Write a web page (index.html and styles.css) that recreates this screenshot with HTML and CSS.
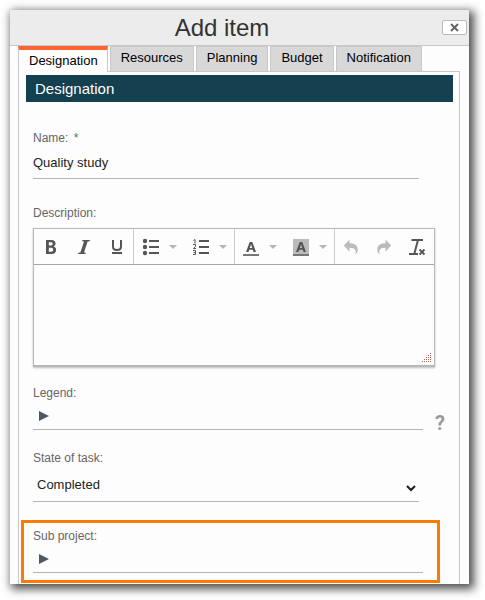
FILE: index.html
```html
<!DOCTYPE html>
<html lang="en">
<head>
<meta charset="utf-8">
<meta name="viewport" content="width=device-width, initial-scale=1">
<title>Add item</title>
<link rel="stylesheet" href="styles.css">
</head>
<body>
<main class="dialog" role="dialog" aria-labelledby="dialog-title">
  <header class="dialog-header">
    <h1 class="dialog-title" id="dialog-title">Add item</h1>
    <button class="close" type="button" aria-label="Close">
      <svg width="9" height="9" viewBox="0 0 9 9"><path d="M1 1l7 7M8 1l-7 7" stroke="#666" stroke-width="2"/></svg>
    </button>
  </header>
  <div class="dialog-body">
    <div class="tabs" role="tablist">
      <button class="tab tab-active" type="button" role="tab" aria-selected="true">Designation</button>
      <button class="tab" type="button" role="tab">Resources</button>
      <button class="tab" type="button" role="tab">Planning</button>
      <button class="tab" type="button" role="tab">Budget</button>
      <button class="tab" type="button" role="tab">Notification</button>
    </div>
    <form class="panel" role="tabpanel">
      <h2 class="section-title">Designation</h2>

      <div class="field field-name">
        <label class="label" for="name">Name: <span class="required">*</span></label>
        <input class="line line-name" id="name" type="text" value="Quality study">
      </div>

      <div class="field field-description">
        <label class="label" for="description">Description:</label>
        <div class="editor">
          <div class="toolbar" role="toolbar">
            <div class="group">
              <button class="tool" type="button" aria-label="Bold"><svg width="20" height="20" viewBox="0 0 20 20"><path fill-rule="evenodd" fill="#555" d="M5 3h5.300c2.700 0 4.200 1.300 4.200 3.500 0 1.400-.7 2.400-1.900 2.900 1.600.4 2.500 1.600 2.500 3.300 0 2.700-1.700 4.300-4.600 4.300H5zM7.800 5.200v3.300h2c1.300 0 1.900-.6 1.900-1.700 0-1.100-.6-1.600-1.900-1.600zM7.800 10.700v4h2.300c1.400 0 2.100-.7 2.100-2s-.7-2-2.100-2z"/></svg></button>
              <button class="tool" type="button" aria-label="Italic"><svg width="20" height="20" viewBox="0 0 20 20"><path fill="#555" d="M8.500 3H16l-.4 1.200-2 .4L10 15.400l1.800.4-.4 1.200H4l.4-1.200 2-.4L10 4.600l-1.900-.4z"/></svg></button>
              <button class="tool" type="button" aria-label="Underline"><svg width="20" height="20" viewBox="0 0 20 20"><path fill="none" stroke="#555" stroke-width="2" d="M6 3v6.500c0 2.400 1.500 3.500 4 3.500s4-1.100 4-3.500V3M5 16h10"/></svg></button>
            </div>
            <div class="group">
              <button class="tool tool-wide" type="button" aria-label="Bulleted list"><svg width="20" height="20" viewBox="0 0 20 20"><g fill="#555"><circle cx="4" cy="4" r="2.200"/><circle cx="4" cy="10" r="2.200"/><circle cx="4" cy="16" r="2.200"/><path d="M8 3h10v2H8zM8 9h10v2H8zM8 15h10v2H8z"/></g></svg><svg class="caret" width="8" height="4" viewBox="0 0 8 4"><path fill="#b4b7ba" d="M0 0h8L4 4z"/></svg></button>
              <button class="tool tool-wide" type="button" aria-label="Numbered list"><svg width="20" height="20" viewBox="0 0 20 20"><path fill="#555" d="M8 3h10v2H8zM8 9h10v2H8zM8 15h10v2H8z"/><path fill="none" stroke="#555" d="M2.500 3.500l1.500-1v4M2 7.500h2.500v2L2.500 11.500H5M2 13.500h2.500v4H2M2.500 15.500h2"/></svg><svg class="caret" width="8" height="4" viewBox="0 0 8 4"><path fill="#b4b7ba" d="M0 0h8L4 4z"/></svg></button>
            </div>
            <div class="group">
              <button class="tool tool-wide" type="button" aria-label="Text color"><svg width="20" height="20" viewBox="0 0 20 20"><path fill="#777" d="M2 17h16v2H2z"/><path fill-rule="evenodd" fill="#555" d="M8.700 5h2.600l3.700 10h-2.500l-.7-2.200H8.200L7.500 15H5zM10 7.300L8.800 11h2.400z"/></svg><svg class="caret" width="8" height="4" viewBox="0 0 8 4"><path fill="#b4b7ba" d="M0 0h8L4 4z"/></svg></button>
              <button class="tool tool-wide" type="button" aria-label="Background color"><svg width="20" height="20" viewBox="0 0 20 20"><path fill="#bbb" d="M2 2h16v15H2z"/><path fill="#777" d="M2 17h16v2H2z"/><path fill-rule="evenodd" fill="#555" d="M8.700 5h2.600l3.700 10h-2.500l-.7-2.200H8.200L7.500 15H5zM10 7.300L8.800 11h2.400z"/></svg><svg class="caret" width="8" height="4" viewBox="0 0 8 4"><path fill="#b4b7ba" d="M0 0h8L4 4z"/></svg></button>
            </div>
            <div class="group group-last">
              <button class="tool" type="button" aria-label="Undo"><svg width="20" height="20" viewBox="0 0 20 20"><path fill="#bbb" d="M8.500 2.500v3.800c5.500 0 8.300 2.600 8.300 6.200 0 2.200-1 3.900-2.800 5 .8-1.400 1-2.700.5-4-.8-2-2.600-2.700-6-2.700v3.900L2.800 8.500z"/></svg></button>
              <button class="tool" type="button" aria-label="Redo"><svg width="20" height="20" viewBox="0 0 20 20"><path fill="#bbb" d="M11.500 2.500v3.800c-5.500 0-8.300 2.600-8.300 6.200 0 2.200 1 3.900 2.800 5-.8-1.400-1-2.700-.5-4 .8-2 2.600-2.700 6-2.700v3.900l5.700-6.200z"/></svg></button>
              <button class="tool" type="button" aria-label="Clear formatting"><svg width="20" height="20" viewBox="0 0 20 20"><path fill="none" stroke="#555" stroke-width="2" d="M4.500 3H16M11 3L7.500 16M2 17h9"/><path fill="none" stroke="#555" stroke-width="1.800" d="M12.500 12.500l5 5M17.500 12.500l-5 5"/></svg></button>
            </div>
          </div>
          <textarea class="editor-text" id="description"></textarea>
          <svg class="grip" width="10" height="10" viewBox="0 0 10 10"><path stroke="#a8675a" stroke-dasharray="1 1" d="M8 .5h2M6 2.500h4M4 4.500h6M2 6.500h8M0 8.500h10"/></svg>
        </div>
      </div>

      <div class="field field-legend">
        <span class="label" id="legend-label">Legend:</span>
        <div class="legend-row">
          <button class="line line-expand" type="button" aria-labelledby="legend-label"><svg width="10" height="10" viewBox="0 0 10 10"><path fill="#505862" d="M0 0l10 5-10 5z"/></svg></button>
          <button class="help" type="button">?</button>
        </div>
      </div>

      <div class="field field-state">
        <label class="label" for="state">State of task:</label>
        <div class="select-wrap">
          <select class="line line-select" id="state"><option>Completed</option></select>
          <svg class="chevron" width="10" height="7" viewBox="0 0 10 7"><path fill="none" stroke="#1c1c1c" stroke-width="2" d="M1 1l4 4 4-4"/></svg>
        </div>
      </div>

      <div class="highlight">
        <span class="label" id="sub-label">Sub project:</span>
        <button class="line line-expand" type="button" aria-labelledby="sub-label"><svg width="10" height="10" viewBox="0 0 10 10"><path fill="#505862" d="M0 0l10 5-10 5z"/></svg></button>
      </div>
    </form>
  </div>
</main>
</body>
</html>
```
FILE: styles.css
```css
* {
  box-sizing: border-box;
}

body {
  margin: 0;
  padding: 10px 16px 16px 10px;
  background: #fff;
  color: #222;
  font: 13px/16px "Liberation Sans", Arial, sans-serif;
}

button,
input,
select,
textarea {
  margin: 0;
  padding: 0;
  border: 0;
  border-radius: 0;
  background: none;
  color: inherit;
  font: inherit;
}

svg {
  display: block;
  flex: none;
}

.dialog {
  background: #fdfdfd;
  box-shadow: 3px 3px 9px 2px rgba(0, 0, 0, 0.7);
}

.dialog-header {
  display: flex;
  align-items: center;
  height: 36px;
  padding-right: 2px;
  border-bottom: 1px solid #c8c8c8;
  background: #ececec;
}

.dialog-title {
  flex: 1;
  margin: 0;
  padding-right: 8px;
  color: #333;
  font-size: 24px;
  font-weight: 400;
  line-height: 32px;
  text-align: center;
}

.close {
  display: flex;
  align-items: center;
  justify-content: center;
  width: 25px;
  height: 15px;
  border: 1px solid #bbb;
  border-radius: 2px;
  background: #fff;
}

.dialog-body {
  padding: 0 9px 0 8px;
}

.tabs {
  display: flex;
  gap: 2px;
}

.tab {
  height: 25px;
  padding: 0 10px 2px;
  border: 1px solid #c8c8c8;
  border-width: 1px 1px 0;
  background: #d8d8d8;
  color: #000;
}

.tab-active {
  position: relative;
  height: 26px;
  margin-bottom: -1px;
  padding: 0 9px 0 10px;
  border-top: 4px solid #fb6533;
  background: #fdfdfd;
}

.panel {
  padding: 3px 0 1px;
  border: 1px solid #c8c8c8;
  border-bottom: 0;
}

.section-title {
  margin: 0 6px 0 7px;
  padding-left: 9px;
  background: #14404f;
  color: #fff;
  font-size: 15px;
  font-weight: 400;
  line-height: 27px;
}

.field {
  padding-left: 14px;
}

.label {
  display: block;
  color: #666;
  font-size: 12px;
  line-height: 16px;
}

.required {
  margin-left: 2px;
  color: #3a8a3a;
}

.line {
  display: block;
  width: 100%;
  border-bottom: 1px solid #b5b5b5;
}

.field-name {
  padding-top: 28px;
  padding-right: 40px;
}

.line-name {
  height: 33px;
}

.field-description {
  padding-top: 26px;
  padding-right: 24px;
}

.editor {
  position: relative;
  margin-top: 7px;
  border: 1px solid #b8b8b8;
  border-bottom-width: 2px;
  box-shadow: 0 1px 2px rgba(0, 0, 0, 0.25);
}

.toolbar {
  display: flex;
  height: 36px;
  border-bottom: 1px solid #a5a5a5;
}

.group {
  display: flex;
  flex: 1;
  align-items: center;
  justify-content: space-around;
  border-right: 1px solid #ccc;
}

.group-last {
  border-right: 0;
}

.tool-wide {
  display: flex;
  align-items: center;
  gap: 8px;
}

.editor-text {
  display: block;
  width: 100%;
  height: 100px;
  resize: none;
}

.grip {
  position: absolute;
  right: 2px;
  bottom: 2px;
}

.field-legend {
  padding-top: 18px;
}

.legend-row {
  display: flex;
  gap: 10px;
  padding-right: 12px;
}

.line-expand {
  height: 29px;
  padding: 2px 0 0 6px;
}

.legend-row .line-expand {
  flex: 1;
}

.help {
  align-self: flex-end;
  width: 14px;
  color: #999;
  font-family: Roboto, sans-serif;
  font-size: 20px;
  font-weight: 700;
  line-height: 14px;
}

.field-state {
  padding-top: 20px;
  padding-right: 40px;
}

.select-wrap {
  position: relative;
}

.line-select {
  height: 36px;
  padding: 2px 4px 0;
  appearance: none;
}

.chevron {
  position: absolute;
  right: 3px;
  top: 19px;
  pointer-events: none;
}

.highlight {
  margin: 18px 19px 0 2px;
  padding: 5px 14px 7px 9px;
  border: 3px solid #ff7b00;
}
```
